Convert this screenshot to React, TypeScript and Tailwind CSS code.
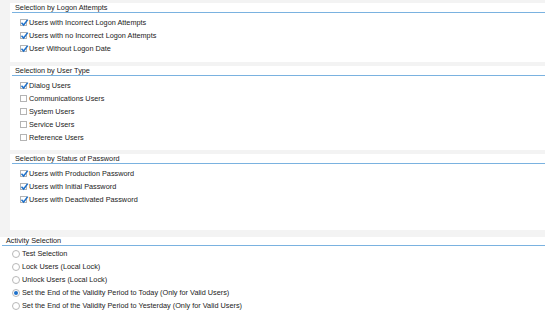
import React from "react";

const groups = [
  {
    title: "Selection by Logon Attempts",
    items: [
      { label: "Users with Incorrect Logon Attempts", checked: true },
      { label: "Users with no Incorrect Logon Attempts", checked: true },
      { label: "User Without Logon Date", checked: true },
    ],
    pb: "pb-[7px]",
  },
  {
    title: "Selection by User Type",
    items: [
      { label: "Dialog Users", checked: true },
      { label: "Communications Users", checked: false },
      { label: "System Users", checked: false },
      { label: "Service Users", checked: false },
      { label: "Reference Users", checked: false },
    ],
    pb: "pb-[6px]",
  },
  {
    title: "Selection by Status of Password",
    items: [
      { label: "Users with Production Password", checked: true },
      { label: "Users with Initial Password", checked: true },
      { label: "Users with Deactivated Password", checked: true },
    ],
    pb: "pb-[24px]",
  },
];

const activities = [
  { label: "Test Selection", on: false },
  { label: "Lock Users (Local Lock)", on: false },
  { label: "Unlock Users (Local Lock)", on: false },
  { label: "Set the End of the Validity Period to Today (Only for Valid Users)", on: true },
  { label: "Set the End of the Validity Period to Yesterday (Only for Valid Users)", on: false },
];

function Checkbox({ checked }: { checked: boolean }) {
  return (
    <span className="relative w-[7px] h-[7px] border border-[#b4b4b4] bg-white mr-[1px] shrink-0">
      {checked && (
        <svg width="9" height="9" viewBox="0 0 9 9" className="absolute -left-[1px] -top-[2px]">
          <path d="M1.5 4.8 L3.6 7 L7.8 1.6" fill="none" stroke="#1c6fc9" strokeWidth="1.5" />
        </svg>
      )}
    </span>
  );
}

function Radio({ on }: { on: boolean }) {
  return (
    <span className="w-[8px] h-[8px] rounded-full border border-[#b8b8b8] bg-white flex items-center justify-center mr-[1px] shrink-0">
      {on && <span className="w-[4px] h-[4px] rounded-full bg-[#1c6fc9]" />}
    </span>
  );
}

export default function App() {
  return (
    <div
      className="w-[545px] h-[317px] bg-white overflow-hidden text-[#222] text-[7.3px] leading-none"
      style={{ fontFamily: '"Liberation Sans", Arial, sans-serif' }}
    >
      <div className="bg-[#f3f3f3] pl-[10px] pt-[3px] pb-[7px] flex flex-col gap-[4px]">
        {groups.map((g) => (
          <div key={g.title} className={`bg-white pl-[2px] ${g.pb}`}>
            <div className="h-[10px] border-b border-[#7ab2e0] pl-[3px] flex items-end pb-[1px]">
              {g.title}
            </div>
            <div className="pl-[8px] pt-[3px]">
              {g.items.map((it) => (
                <div key={it.label} className="h-[13px] flex items-center gap-[1px]">
                  <Checkbox checked={it.checked} />
                  <span>{it.label}</span>
                </div>
              ))}
            </div>
          </div>
        ))}
      </div>
      <div className="pl-[2px]">
        <div className="h-[9px] border-b border-[#7ab2e0] pl-[4px] flex items-end pb-[1px]">
          Activity Selection
        </div>
        <div className="pl-[10px] pt-[1px]">
          {activities.map((a) => (
            <div key={a.label} className="h-[13px] flex items-center gap-[1px]">
              <Radio on={a.on} />
              <span>{a.label}</span>
            </div>
          ))}
        </div>
      </div>
    </div>
  );
}
